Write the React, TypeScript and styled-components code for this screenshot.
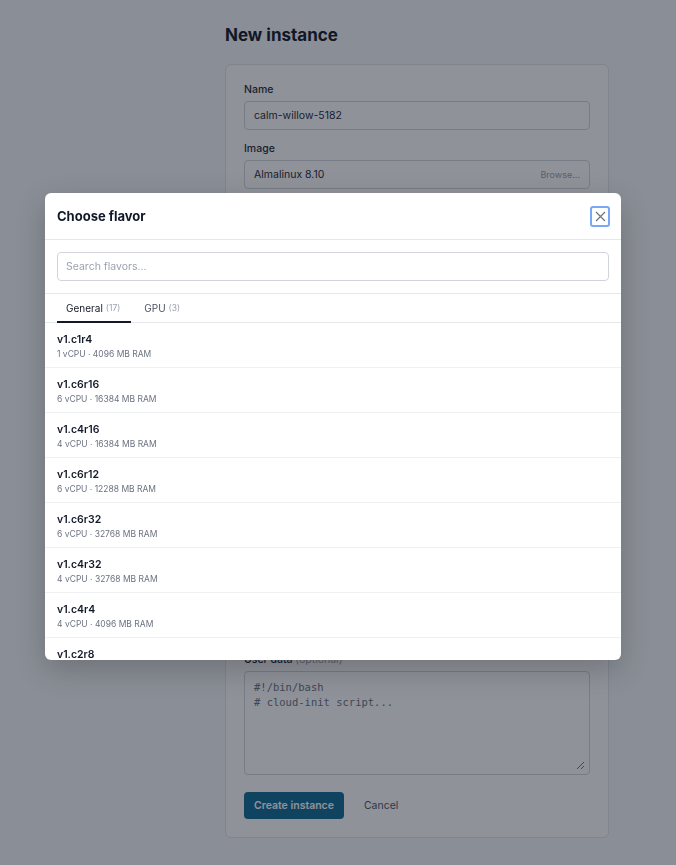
import styled, { createGlobalStyle } from "styled-components";

const GlobalStyle = createGlobalStyle`
  html, body {
    margin: 0;
    padding: 0;
    background: #f6f7f9;
    font-family: "Inter", "Liberation Sans", sans-serif;
    color: #111827;
  }
  * { box-sizing: border-box; }
`;

const Page = styled.div`
  width: 676px;
  min-height: 865px;
  padding: 24px 0 28px 225px;
`;

const Title = styled.h1`
  margin: 0 0 18px;
  font-size: 17px;
  font-weight: 700;
  line-height: 22px;
  color: #111827;
`;

const Card = styled.div`
  width: 384px;
  background: #fff;
  border: 1px solid #e1e4e8;
  border-radius: 6px;
  padding: 18px 18px 18px;
  display: flex;
  flex-direction: column;
`;

const Field = styled.div`
  display: flex;
  flex-direction: column;
  gap: 5px;
  margin-bottom: 12px;
`;

const Label = styled.label`
  font-size: 10.5px;
  font-weight: 500;
  color: #1f2937;
  line-height: 13px;
`;

const Optional = styled.span`
  color: #9ca3af;
  font-weight: 400;
`;

const InputBox = styled.div`
  height: 29px;
  border: 1px solid #d1d5db;
  border-radius: 4px;
  background: #fff;
  display: flex;
  align-items: center;
  justify-content: space-between;
  padding: 0 9px;
  font-size: 10.5px;
  color: #1f2937;
`;

const Hint = styled.span`
  font-size: 9px;
  color: #9ca3af;
`;

const CheckRow = styled.div`
  height: 27px;
  margin-bottom: 12px;
  font-size: 10.5px;
  display: flex;
  align-items: center;
  gap: 6px;
`;

const TextArea = styled.div`
  position: relative;
  height: 104px;
  border: 1px solid #d1d5db;
  border-radius: 4px;
  padding: 8px 9px;
  font-family: "DejaVu Sans Mono", "Liberation Mono", monospace;
  font-size: 10.5px;
  line-height: 15px;
  color: #6b7280;
  white-space: pre;
`;

const Grip = styled.svg`
  position: absolute;
  right: 4px;
  bottom: 4px;
`;

const Actions = styled.div`
  display: flex;
  align-items: center;
  gap: 14px;
  margin-top: 5px;
`;

const PrimaryButton = styled.button`
  height: 27px;
  padding: 0 10px;
  border: none;
  border-radius: 4px;
  background: #0e6a94;
  color: #fff;
  font-family: inherit;
  font-size: 10.5px;
  font-weight: 600;
`;

const GhostButton = styled.button`
  border: none;
  background: none;
  font-family: inherit;
  font-size: 10.5px;
  color: #4b5563;
`;

const Overlay = styled.div`
  position: fixed;
  inset: 0;
  background: rgba(17, 24, 39, 0.47);
`;

const Modal = styled.div`
  position: fixed;
  left: 45px;
  top: 193px;
  width: 576px;
  height: 467px;
  background: #fff;
  border-radius: 6px;
  box-shadow: 0 10px 30px rgba(0, 0, 0, 0.2);
  display: flex;
  flex-direction: column;
  overflow: hidden;
`;

const ModalHeader = styled.div`
  height: 47px;
  flex-shrink: 0;
  display: flex;
  align-items: center;
  justify-content: space-between;
  padding: 0 11px 0 12px;
  border-bottom: 1px solid #e5e7eb;
`;

const ModalTitle = styled.h2`
  margin: 0;
  font-size: 13px;
  font-weight: 700;
  color: #111827;
`;

const CloseButton = styled.button`
  width: 20px;
  height: 21px;
  padding: 0;
  border: 2px solid #7aa6f8;
  border-radius: 3px;
  background: #fff;
  display: flex;
  align-items: center;
  justify-content: center;
`;

const SearchSection = styled.div`
  flex-shrink: 0;
  padding: 12px 12px 12px;
  border-bottom: 1px solid #e5e7eb;
`;

const SearchInput = styled.div`
  height: 29px;
  border: 1px solid #d1d5db;
  border-radius: 4px;
  display: flex;
  align-items: center;
  padding: 0 8px;
  font-size: 10.5px;
  color: #9ca3af;
`;

const Tabs = styled.div`
  flex-shrink: 0;
  display: flex;
  padding: 0 12px;
  border-bottom: 1px solid #e5e7eb;
`;

const Tab = styled.div<{ $active?: boolean }>`
  height: 29px;
  padding: 0 11px 0 9px;
  display: flex;
  align-items: center;
  gap: 3px;
  font-size: 10px;
  color: ${(p) => (p.$active ? "#111827" : "#4b5563")};
  border-bottom: 2px solid ${(p) => (p.$active ? "#111827" : "transparent")};
  margin-bottom: -1px;
  & + & {
    padding-left: 13px;
  }
`;

const TabCount = styled.span`
  font-size: 8.5px;
  color: #9ca3af;
`;

const List = styled.div`
  flex: 1;
  overflow: hidden;
`;

const Row = styled.div`
  height: 45px;
  padding: 9px 12px 0;
  border-bottom: 1px solid #eef0f2;
  display: flex;
  flex-direction: column;
  gap: 1px;
`;

const RowName = styled.div`
  font-size: 10.5px;
  font-weight: 600;
  line-height: 15px;
  color: #111827;
`;

const RowSpec = styled.div`
  font-size: 8.5px;
  line-height: 12px;
  color: #6b7280;
`;

const flavors = [
  ["v1.c1r4", 1, 4096],
  ["v1.c6r16", 6, 16384],
  ["v1.c4r16", 4, 16384],
  ["v1.c6r12", 6, 12288],
  ["v1.c6r32", 6, 32768],
  ["v1.c4r32", 4, 32768],
  ["v1.c4r4", 4, 4096],
  ["v1.c2r8", 2, 8192],
  ["v1.c2r4", 2, 4096],
] as const;

const hiddenFields = [
  ["Flavor", "Choose…"],
  ["Network", "default"],
  ["Security groups", "default"],
  ["Key pair", "none"],
  ["Availability zone", "nova"],
  ["Volume size (GB)", "20"],
  ["Count", "1"],
];

const App = () => {
  return (
    <>
      <GlobalStyle />
      <Page>
        <Title>New instance</Title>
        <Card>
          <Field>
            <Label>Name</Label>
            <InputBox>calm-willow-5182</InputBox>
          </Field>
          <Field>
            <Label>Image</Label>
            <InputBox>
              Almalinux 8.10
              <Hint>Browse...</Hint>
            </InputBox>
          </Field>
          {hiddenFields.map(([label, value]) => (
            <Field key={label}>
              <Label>{label}</Label>
              <InputBox>{value}</InputBox>
            </Field>
          ))}
          <CheckRow>
            <input type="checkbox" /> Delete volume on termination
          </CheckRow>
          <Field>
            <Label>
              User data <Optional>(optional)</Optional>
            </Label>
            <TextArea>
              {"#!/bin/bash\n# cloud-init script..."}
              <Grip width="9" height="9" viewBox="0 0 9 9">
                <path d="M8 1L1 8M8 5L5 8" stroke="#6b7280" strokeWidth="1" />
              </Grip>
            </TextArea>
          </Field>
          <Actions>
            <PrimaryButton>Create instance</PrimaryButton>
            <GhostButton>Cancel</GhostButton>
          </Actions>
        </Card>
      </Page>
      <Overlay />
      <Modal>
        <ModalHeader>
          <ModalTitle>Choose flavor</ModalTitle>
          <CloseButton>
            <svg width="11" height="11" viewBox="0 0 11 11">
              <path d="M1 1L10 10M10 1L1 10" stroke="#6b7280" strokeWidth="1.2" />
            </svg>
          </CloseButton>
        </ModalHeader>
        <SearchSection>
          <SearchInput>Search flavors...</SearchInput>
        </SearchSection>
        <Tabs>
          <Tab $active>
            General <TabCount>(17)</TabCount>
          </Tab>
          <Tab>
            GPU <TabCount>(3)</TabCount>
          </Tab>
        </Tabs>
        <List>
          {flavors.map(([name, cpu, ram]) => (
            <Row key={name}>
              <RowName>{name}</RowName>
              <RowSpec>
                {cpu} vCPU · {ram} MB RAM
              </RowSpec>
            </Row>
          ))}
        </List>
      </Modal>
    </>
  );
};

export default App;
